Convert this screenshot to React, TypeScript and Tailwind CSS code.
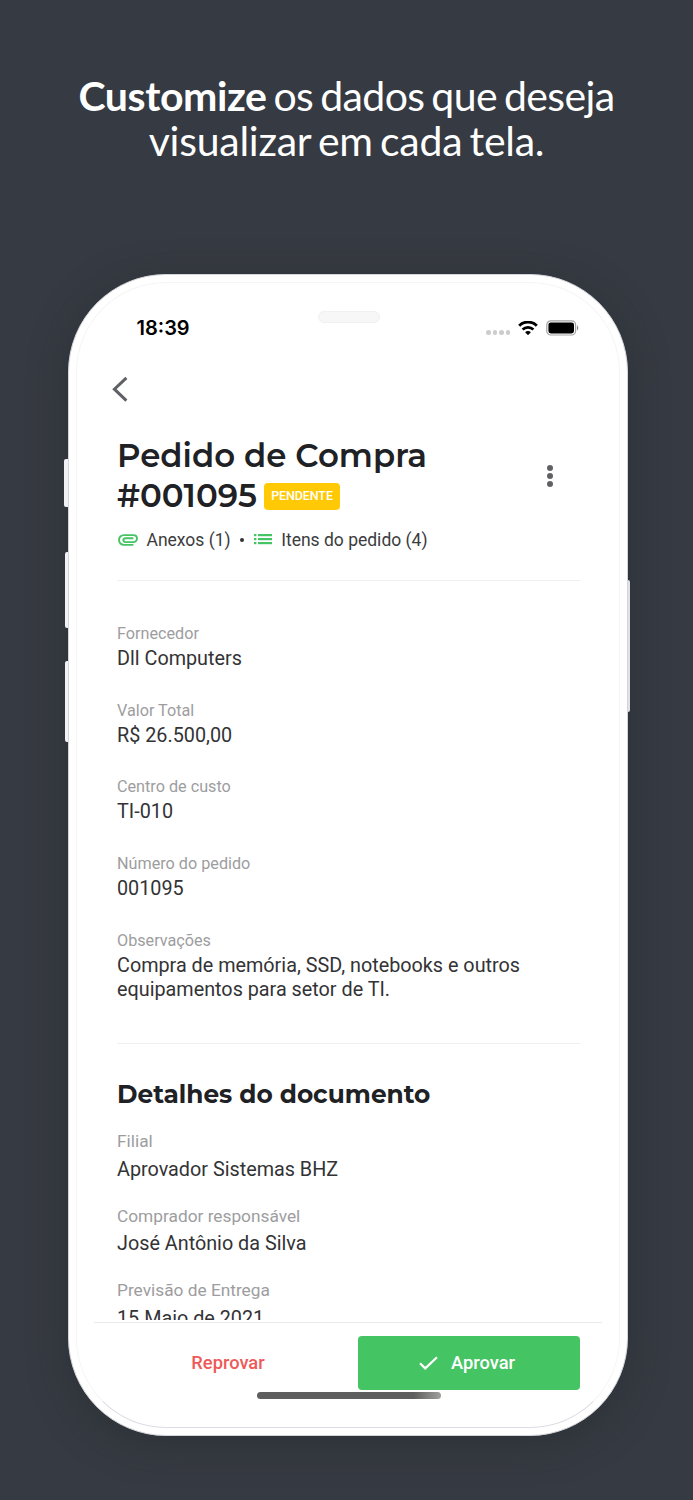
interface Field {
  label: string;
  value: string;
}

const ORDER_FIELDS: Field[] = [
  { label: 'Fornecedor', value: 'Dll Computers' },
  { label: 'Valor Total', value: 'R$ 26.500,00' },
  { label: 'Centro de custo', value: 'TI-010' },
  { label: 'Número do pedido', value: '001095' },
  { label: 'Observações', value: 'Compra de memória, SSD, notebooks e outros equipamentos para setor de TI.' },
];

const DOCUMENT_FIELDS: Field[] = [
  { label: 'Filial', value: 'Aprovador Sistemas BHZ' },
  { label: 'Comprador responsável', value: 'José Antônio da Silva' },
  { label: 'Previsão de Entrega', value: '15 Maio de 2021' },
];

function StatusBar() {
  return (
    <div className="flex h-[30px] items-center justify-between pl-[67.5px] pr-[48px]">
      <span className="font-['Inter'] text-[20px] font-semibold leading-[30px] text-black">18:39</span>
      <div className="flex items-center">
        <div className="mr-[8px] mt-[9px] flex gap-[2px]">
          {[0, 1, 2, 3].map((i) => (
            <span key={i} className="size-[4.4px] rounded-full bg-[#cccccc]" />
          ))}
        </div>
        <svg className="mr-[8px] h-[14px] w-[20px]" viewBox="0 0 20 14" fill="none" stroke="#000">
          <path d="M1.2 4.7C6 -0.1 14 -0.1 18.8 4.7" strokeWidth="2.9" />
          <path d="M4.6 8.5C7.6 5.6 12.4 5.6 15.4 8.5" strokeWidth="2.7" />
          <path d="M10 14.2 7.1 11.2C8.7 9.5 11.3 9.5 12.9 11.2Z" fill="#000" stroke="none" />
        </svg>
        <svg className="h-[16px] w-[33px]" viewBox="0 0 33 16" fill="none">
          <rect x="0.8" y="0.8" width="28.8" height="14.2" rx="4" stroke="#a3a3a3" strokeWidth="1.2" />
          <rect x="2.4" y="2.4" width="25.6" height="11" rx="2.4" fill="#000" />
          <path d="M31 5.3c1.6.7 1.6 4.5 0 5.2z" fill="#8a8a8a" />
        </svg>
      </div>
    </div>
  );
}

function ClipIcon() {
  return (
    <svg className="-mt-px ml-px h-[12px] w-[20px]" viewBox="0 0 20 12" fill="none" stroke="#45c463" strokeWidth="1.9">
      <path d="M15.4 10.9H6C3 10.9 1 8.7 1 6S3 1.1 6 1.1H15.2C17.5 1.1 19 2.6 19 4.6S17.5 8.1 15.2 8.1H7.6C6.2 8.1 5.4 7.3 5.4 6.1S6.2 4.2 7.6 4.2H15.4" />
    </svg>
  );
}

function ListIcon() {
  return (
    <svg className="h-[12px] w-[18px]" viewBox="0 0 18 12" fill="#45c463">
      {[0, 4, 8].map((y) => (
        <g key={y}>
          <rect x="0" y={y} width="2.4" height="2.2" />
          <rect x="4" y={y} width="14" height="2.2" />
        </g>
      ))}
    </svg>
  );
}

export default function App() {
  return (
    <div className="flex h-[1500px] w-[693px] flex-col overflow-hidden bg-[#363a42] font-['Roboto',sans-serif]">
      <h1 className="h-[274px] shrink-0 pt-[74px] text-center font-['Lato',sans-serif] text-[41px] leading-[44.5px] text-white [word-spacing:-3px]">
        <b className="font-bold tracking-[-0.4px]">Customize</b>
        <span className="tracking-[-0.6px]"> os dados que deseja</span>
        <br />
        <span className="tracking-[-0.25px]">visualizar em cada tela.</span>
      </h1>

      <div className="relative ml-[68px] h-[1162px] w-[560px] shrink-0 rounded-[98px] shadow-[0_8px_36px_rgba(36,44,48,0.5)]">
        {/* side buttons */}
        <div className="absolute left-[-4px] top-[185px] h-[48px] w-[10px] rounded-[2px] bg-[#f1f2f6]" />
        <div className="absolute left-[-3px] top-[278px] h-[76px] w-[10px] rounded-[2px] bg-[#f1f2f6]" />
        <div className="absolute left-[-3px] top-[387px] h-[81px] w-[10px] rounded-[2px] bg-[#f1f2f6]" />
        <div className="absolute right-[-2px] top-[306px] h-[132px] w-[10px] rounded-[2px] bg-[#dfe2e5]" />

        <div className="relative flex h-full flex-col overflow-hidden rounded-[98px] border-[1.5px] border-[#d3d5da] bg-white">
          {/* inner rim */}
          <div className="pointer-events-none absolute inset-[7px] rounded-[90px] border border-[#f5f5f7] border-b-[#dcdce4]" />
          <div className="absolute left-[249px] top-[36px] h-[12px] w-[62px] rounded-full border border-[#f0f0f1] bg-[#f7f7f8]" />

          <div className="h-[38px] shrink-0" />
          <StatusBar />

          <svg className="ml-[42px] mt-[33px] h-[26px] w-[18px] shrink-0" viewBox="0 0 18 26" fill="none" stroke="#5f6166" strokeWidth="3">
            <path d="M15.4 1.8 3.4 13.2 15.4 24.6" />
          </svg>

          <div className="ml-[48px] mr-[47px] mt-[33px] flex shrink-0 items-start justify-between border-b border-[#efefef] pb-[28px]">
            <div>
              <h2 className="pt-[1px] font-['Montserrat',sans-serif] text-[32.4px] font-semibold leading-[40px] text-[#202125]">
                <span className="block whitespace-nowrap">Pedido de Compra</span>
                <span className="flex items-center">
                  <span className="w-[147px] whitespace-nowrap">#001095</span>
                  <span className="h-[27px] w-[76px] rounded-[4px] bg-[#ffc905] text-center font-['Roboto'] text-[12.5px] font-medium leading-[26px] tracking-[-0.1px] text-white">
                    PENDENTE
                  </span>
                </span>
              </h2>
              <div className="mt-[12px] flex h-[24px] items-center text-[17.5px] text-[#3c3c3e]">
                <ClipIcon />
                <span className="ml-[8.5px]">Anexos (1)</span>
                <span className="ml-[9px] mr-[10.5px] size-[4px] rounded-full bg-[#333]" />
                <ListIcon />
                <span className="ml-[9px]">Itens do pedido (4)</span>
              </div>
            </div>
            <div className="mr-[27.5px] mt-[30px] flex flex-col gap-[2.5px]">
              <span className="size-[5.5px] rounded-full bg-[#606165]" />
              <span className="size-[5.5px] rounded-full bg-[#606165]" />
              <span className="size-[5.5px] rounded-full bg-[#606165]" />
            </div>
          </div>

          <div className="ml-[48px] mr-[47px] flex h-[738.5px] shrink-0 flex-col overflow-hidden">
            <div className="shrink-0 border-b border-[#efefef] pb-[41.6px] pt-[40.9px]">
              {ORDER_FIELDS.map((f) => (
                <div key={f.label} className="mb-[28px] last:mb-0">
                  <p className="text-[16.2px] leading-[24px] text-[#9d9da0]">{f.label}</p>
                  <p className="mt-[1px] w-[440px] text-[19.8px] leading-[23.75px] text-[#333335]">{f.value}</p>
                </div>
              ))}
            </div>
            <h3 className="mt-[33.5px] shrink-0 whitespace-nowrap font-['Montserrat',sans-serif] text-[24.8px] font-bold leading-[34px] text-[#202125]">
              Detalhes do documento
            </h3>
            <div className="mt-[18px] shrink-0">
              {DOCUMENT_FIELDS.map((f) => (
                <div key={f.label} className="h-[74.5px]">
                  <p className="text-[17.3px] leading-[24px] text-[#9d9da0]">{f.label}</p>
                  <p className="mt-[4.5px] text-[19.8px] leading-[24px] text-[#333335]">{f.value}</p>
                </div>
              ))}
            </div>
          </div>

          <div className="mx-[25px] mt-[2px] flex shrink-0 border-t border-[#eaeaea] pl-[23px] pr-[22px] pt-[13px]">
            <button className="flex-1 pr-[19px] text-[18.3px] font-medium text-[#ee5a59]">Reprovar</button>
            <button className="flex h-[54px] w-[222px] items-center justify-center rounded-[4px] bg-[#45c463] pr-[4px] text-[18.3px] font-medium text-white">
              <svg className="mr-[13px] h-[14px] w-[19px]" viewBox="0 0 19 14" fill="none" stroke="#fff" strokeWidth="2.2">
                <path d="M1 7.2 6.2 12.4 18 1.2" />
              </svg>
              Aprovar
            </button>
          </div>
          <div className="ml-[187.5px] mt-[2.5px] h-[7px] w-[184px] shrink-0 rounded-full bg-linear-to-r from-[#5d5e5d] from-85% to-[#a0a09f]" />
        </div>
      </div>
    </div>
  );
}
